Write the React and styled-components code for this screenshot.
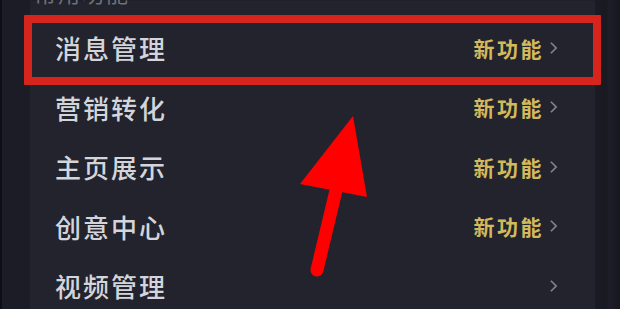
import React from 'react'
import styled, { createGlobalStyle } from 'styled-components'

const GlobalStyle = createGlobalStyle`
  html, body {
    margin: 0;
    padding: 0;
    background: #15161d;
  }
  body {
    font-family: "Noto Sans CJK SC", "Noto Sans", sans-serif;
  }
`

const items = [
  { label: '消息管理', badge: '新功能' },
  { label: '营销转化', badge: '新功能' },
  { label: '主页展示', badge: '新功能' },
  { label: '创意中心', badge: '新功能' },
  { label: '视频管理', badge: null },
]

export default function App() {
  return (
    <>
      <GlobalStyle />
      <Screen>
        <SideStrip />
        <Panel>
          <Heading>常用功能</Heading>
          <List>
            {items.map((item, index) => (
              <Row key={`row-${index}`}>
                <Label>{item.label}</Label>
                <Extra>
                  {item.badge && <Badge>{item.badge}</Badge>}
                  <Chevron viewBox='0 0 10 16'>
                    <path d='M2 2 L8 8 L2 14' />
                  </Chevron>
                </Extra>
              </Row>
            ))}
          </List>
        </Panel>
        <RightStrip />
        <Highlight />
        <Arrow viewBox='0 0 620 309'>
          <line x1='317' y1='270' x2='338' y2='182' />
          <polygon points='353,116 300,184 367,197' />
        </Arrow>
      </Screen>
    </>
  )
}

const Screen = styled.div`
  position: relative;
  width: 620px;
  height: 309px;
  overflow: hidden;
  display: flex;
  background: #15161d;
`

const SideStrip = styled.div`
  width: 28px;
  flex-shrink: 0;
  border-left: 2px solid #0e0f14;
  background: #1b1c25;
`

const RightStrip = styled.div`
  flex: 1;
  background: linear-gradient(90deg, #1a1b24 0%, #181921 40%, #1c1d26 60%, #16171f 100%);
`

const Panel = styled.div`
  width: 565px;
  flex-shrink: 0;
  background: #22232d;
  display: flex;
  flex-direction: column;
`

const Heading = styled.div`
  height: 20px;
  margin-top: -17px;
  padding-left: 4px;
  font-size: 22px;
  letter-spacing: 2px;
  line-height: 18px;
  color: #6f717b;
  background: #1e1f28;
`

const List = styled.div`
  display: flex;
  flex-direction: column;
  padding-top: 17px;
`

const Row = styled.div`
  height: 59.5px;
  display: flex;
  align-items: center;
  justify-content: space-between;
  padding: 0 37px 0 25px;
`

const Label = styled.span`
  font-size: 26px;
  letter-spacing: 2px;
  font-weight: 500;
  color: #d4d5db;
`

const Extra = styled.div`
  display: flex;
  align-items: center;
  gap: 5px;
`

const Badge = styled.span`
  font-size: 21px;
  letter-spacing: 2.5px;
  font-weight: 700;
  color: #d2b95c;
`

const Chevron = styled.svg`
  width: 9px;
  height: 14px;
  fill: none;
  stroke: #80828c;
  stroke-width: 2;
`

const Highlight = styled.div`
  position: absolute;
  left: 24px;
  top: 15px;
  width: 577px;
  height: 70px;
  box-sizing: border-box;
  border: 8px solid #d7241c;
  border-radius: 1px;
`

const Arrow = styled.svg`
  position: absolute;
  left: 0;
  top: 0;
  width: 620px;
  height: 309px;

  line {
    stroke: #ff0000;
    stroke-width: 13;
    stroke-linecap: round;
  }
  polygon {
    fill: #ff0000;
  }
`
